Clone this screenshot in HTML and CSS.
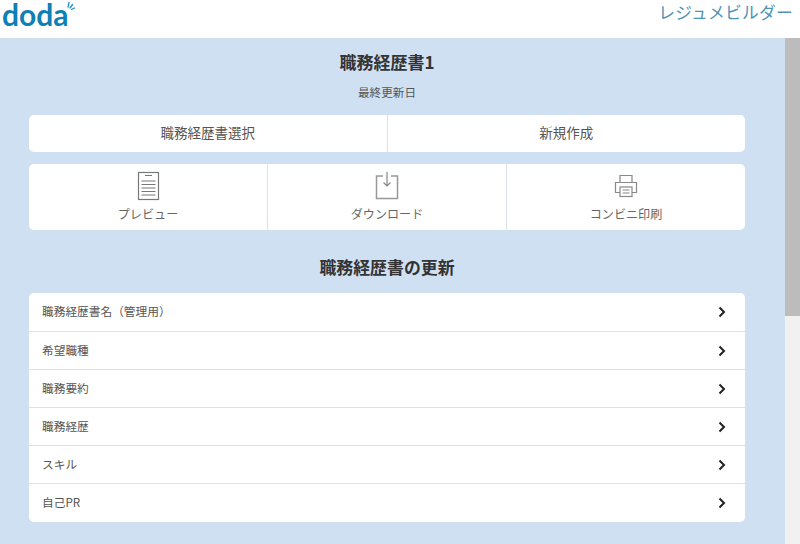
FILE: index.html
```html
<!DOCTYPE html>
<html lang="ja">
<head>
<meta charset="utf-8">
<title>レジュメビルダー</title>
<link rel="stylesheet" href="styles.css">
</head>
<body>
<header class="header">
  <div class="logo"><span class="logo-text">doda</span><svg class="logo-spark" width="10" height="12" viewBox="0 0 10 12"><path d="M3 1.500L2 6M6.500 3.500L4 7M8.500 7L5.500 8.500" fill="none" stroke="#1f8fc0" stroke-width="1.300" stroke-linecap="round"/></svg></div>
  <div class="brand">レジュメビルダー</div>
</header>
<div class="body-row">
  <main class="main">
    <h1 class="title">職務経歴書1</h1>
    <p class="updated">最終更新日</p>
    <div class="card split">
      <div class="split-cell">職務経歴書選択</div>
      <div class="split-cell">新規作成</div>
    </div>
    <div class="card actions">
      <div class="action">
        <svg class="action-icon" width="24" height="30" viewBox="0 0 24 30" fill="none" stroke="#777" stroke-width="1.200"><rect x="2.500" y="1.500" width="20" height="27"/><path d="M9 4.500H16M5.500 10H19.500M5.500 13.500H19.500M5.500 17H19.500M5.500 20.500H19.500M5.500 24H19.500"/></svg>
        <span class="action-label">プレビュー</span>
      </div>
      <div class="action">
        <svg class="action-icon" width="24" height="30" viewBox="0 0 24 30" fill="none" stroke="#888" stroke-width="1.200"><path d="M8 5H1.500V27.500H22.500V5H16" stroke="#999" stroke-width="1.500"/><path d="M12 1V15M8.500 11.500L12 15L15.500 11.500"/></svg>
        <span class="action-label">ダウンロード</span>
      </div>
      <div class="action">
        <svg class="action-icon" width="24" height="30" viewBox="0 0 24 30" fill="none" stroke="#888" stroke-width="1.200"><path d="M6 11.500V4.500H18V11.500"/><path d="M6 21.500H1.500V11.500H22.500V21.500H18"/><rect x="6" y="16" width="12" height="9.500"/><path d="M8.500 19H15.500M8.500 22H15.500"/></svg>
        <span class="action-label">コンビニ印刷</span>
      </div>
    </div>
    <h2 class="section-title">職務経歴書の更新</h2>
    <ul class="card list">
      <li class="list-row"><span>職務経歴書名（管理用）</span><svg class="chevron" width="8" height="12" viewBox="0 0 8 12"><path d="M1.500 1.500L6 6L1.500 10.500" fill="none" stroke="#222" stroke-width="2"/></svg></li>
      <li class="list-row"><span>希望職種</span><svg class="chevron" width="8" height="12" viewBox="0 0 8 12"><path d="M1.500 1.500L6 6L1.500 10.500" fill="none" stroke="#222" stroke-width="2"/></svg></li>
      <li class="list-row"><span>職務要約</span><svg class="chevron" width="8" height="12" viewBox="0 0 8 12"><path d="M1.500 1.500L6 6L1.500 10.500" fill="none" stroke="#222" stroke-width="2"/></svg></li>
      <li class="list-row"><span>職務経歴</span><svg class="chevron" width="8" height="12" viewBox="0 0 8 12"><path d="M1.500 1.500L6 6L1.500 10.500" fill="none" stroke="#222" stroke-width="2"/></svg></li>
      <li class="list-row"><span>スキル</span><svg class="chevron" width="8" height="12" viewBox="0 0 8 12"><path d="M1.500 1.500L6 6L1.500 10.500" fill="none" stroke="#222" stroke-width="2"/></svg></li>
      <li class="list-row"><span>自己PR</span><svg class="chevron" width="8" height="12" viewBox="0 0 8 12"><path d="M1.500 1.500L6 6L1.500 10.500" fill="none" stroke="#222" stroke-width="2"/></svg></li>
    </ul>
  </main>
  <div class="scrollbar"><div class="scroll-thumb"></div></div>
</div>
</body>
</html>
```
FILE: styles.css
```css
* { box-sizing: border-box; }
html, body { margin: 0; height: 100%; overflow: hidden; }
body {
  display: flex;
  flex-direction: column;
  background: #fff;
  color: #555;
  font-family: "Noto Sans CJK JP", "Noto Sans", sans-serif;
}
.header {
  height: 38px;
  flex: none;
  display: flex;
  justify-content: space-between;
  align-items: flex-start;
  padding: 0 7px 0 2px;
  background: #fff;
}
.logo { display: flex; align-items: flex-start; }
.logo-text {
  font-family: "Lato", sans-serif;
  font-weight: 700;
  font-size: 30px;
  line-height: 28px;
  color: #0f7fb5;
}
.logo-spark { margin: 1px 0 0 -3px; }
.brand {
  font-size: 16.800px;
  line-height: 24px;
  color: #4f93b5;
  letter-spacing: 0.200px;
}
.body-row { flex: 1; display: flex; min-height: 0; }
.main {
  flex: 1;
  background: #cfe0f3;
  padding: 0 40px 0 29px;
  display: flex;
  flex-direction: column;
}
.title {
  margin: 13px 0 0;
  font-size: 17px;
  line-height: 22px;
  font-weight: 700;
  color: #333;
  text-align: center;
}
.updated {
  margin: 10px 0 0;
  font-size: 11.600px;
  line-height: 18px;
  text-align: center;
}
.card { background: #fff; border-radius: 5px; }
.split { margin-top: 14px; height: 37px; display: flex; }
.split-cell {
  flex: 1;
  display: flex;
  align-items: center;
  justify-content: center;
  padding-bottom: 4px;
  font-size: 13.500px;
  color: #555;
}
.split-cell:first-child { border-right: 1px solid #dde3ea; }
.actions { margin-top: 12px; height: 66px; display: flex; }
.action {
  flex: 1;
  display: flex;
  flex-direction: column;
  align-items: center;
  padding-top: 7px;
}
.action + .action { border-left: 1px solid #dde3ea; }
.action-icon { display: block; }
.action-label {
  margin-top: 4px;
  font-size: 12.100px;
  line-height: 18px;
  color: #666;
}
.section-title {
  margin: 25px 0 0;
  font-size: 16.900px;
  line-height: 24px;
  font-weight: 700;
  color: #333;
  text-align: center;
}
.list { margin: 14px 0 0; padding: 0 0 1px; list-style: none; }
.list-row {
  height: 38px;
  display: flex;
  align-items: center;
  justify-content: space-between;
  padding: 0 19px 3px 13px;
  font-size: 11.700px;
  color: #555;
  border-top: 1px solid #dde3ea;
}
.list-row:first-child { border-top: 0; }
.chevron { display: block; margin-top: 3px; }
.scrollbar { width: 15px; flex: none; background: #f1f1f1; }
.scroll-thumb { height: 278px; background: #bcbcbc; }
```
